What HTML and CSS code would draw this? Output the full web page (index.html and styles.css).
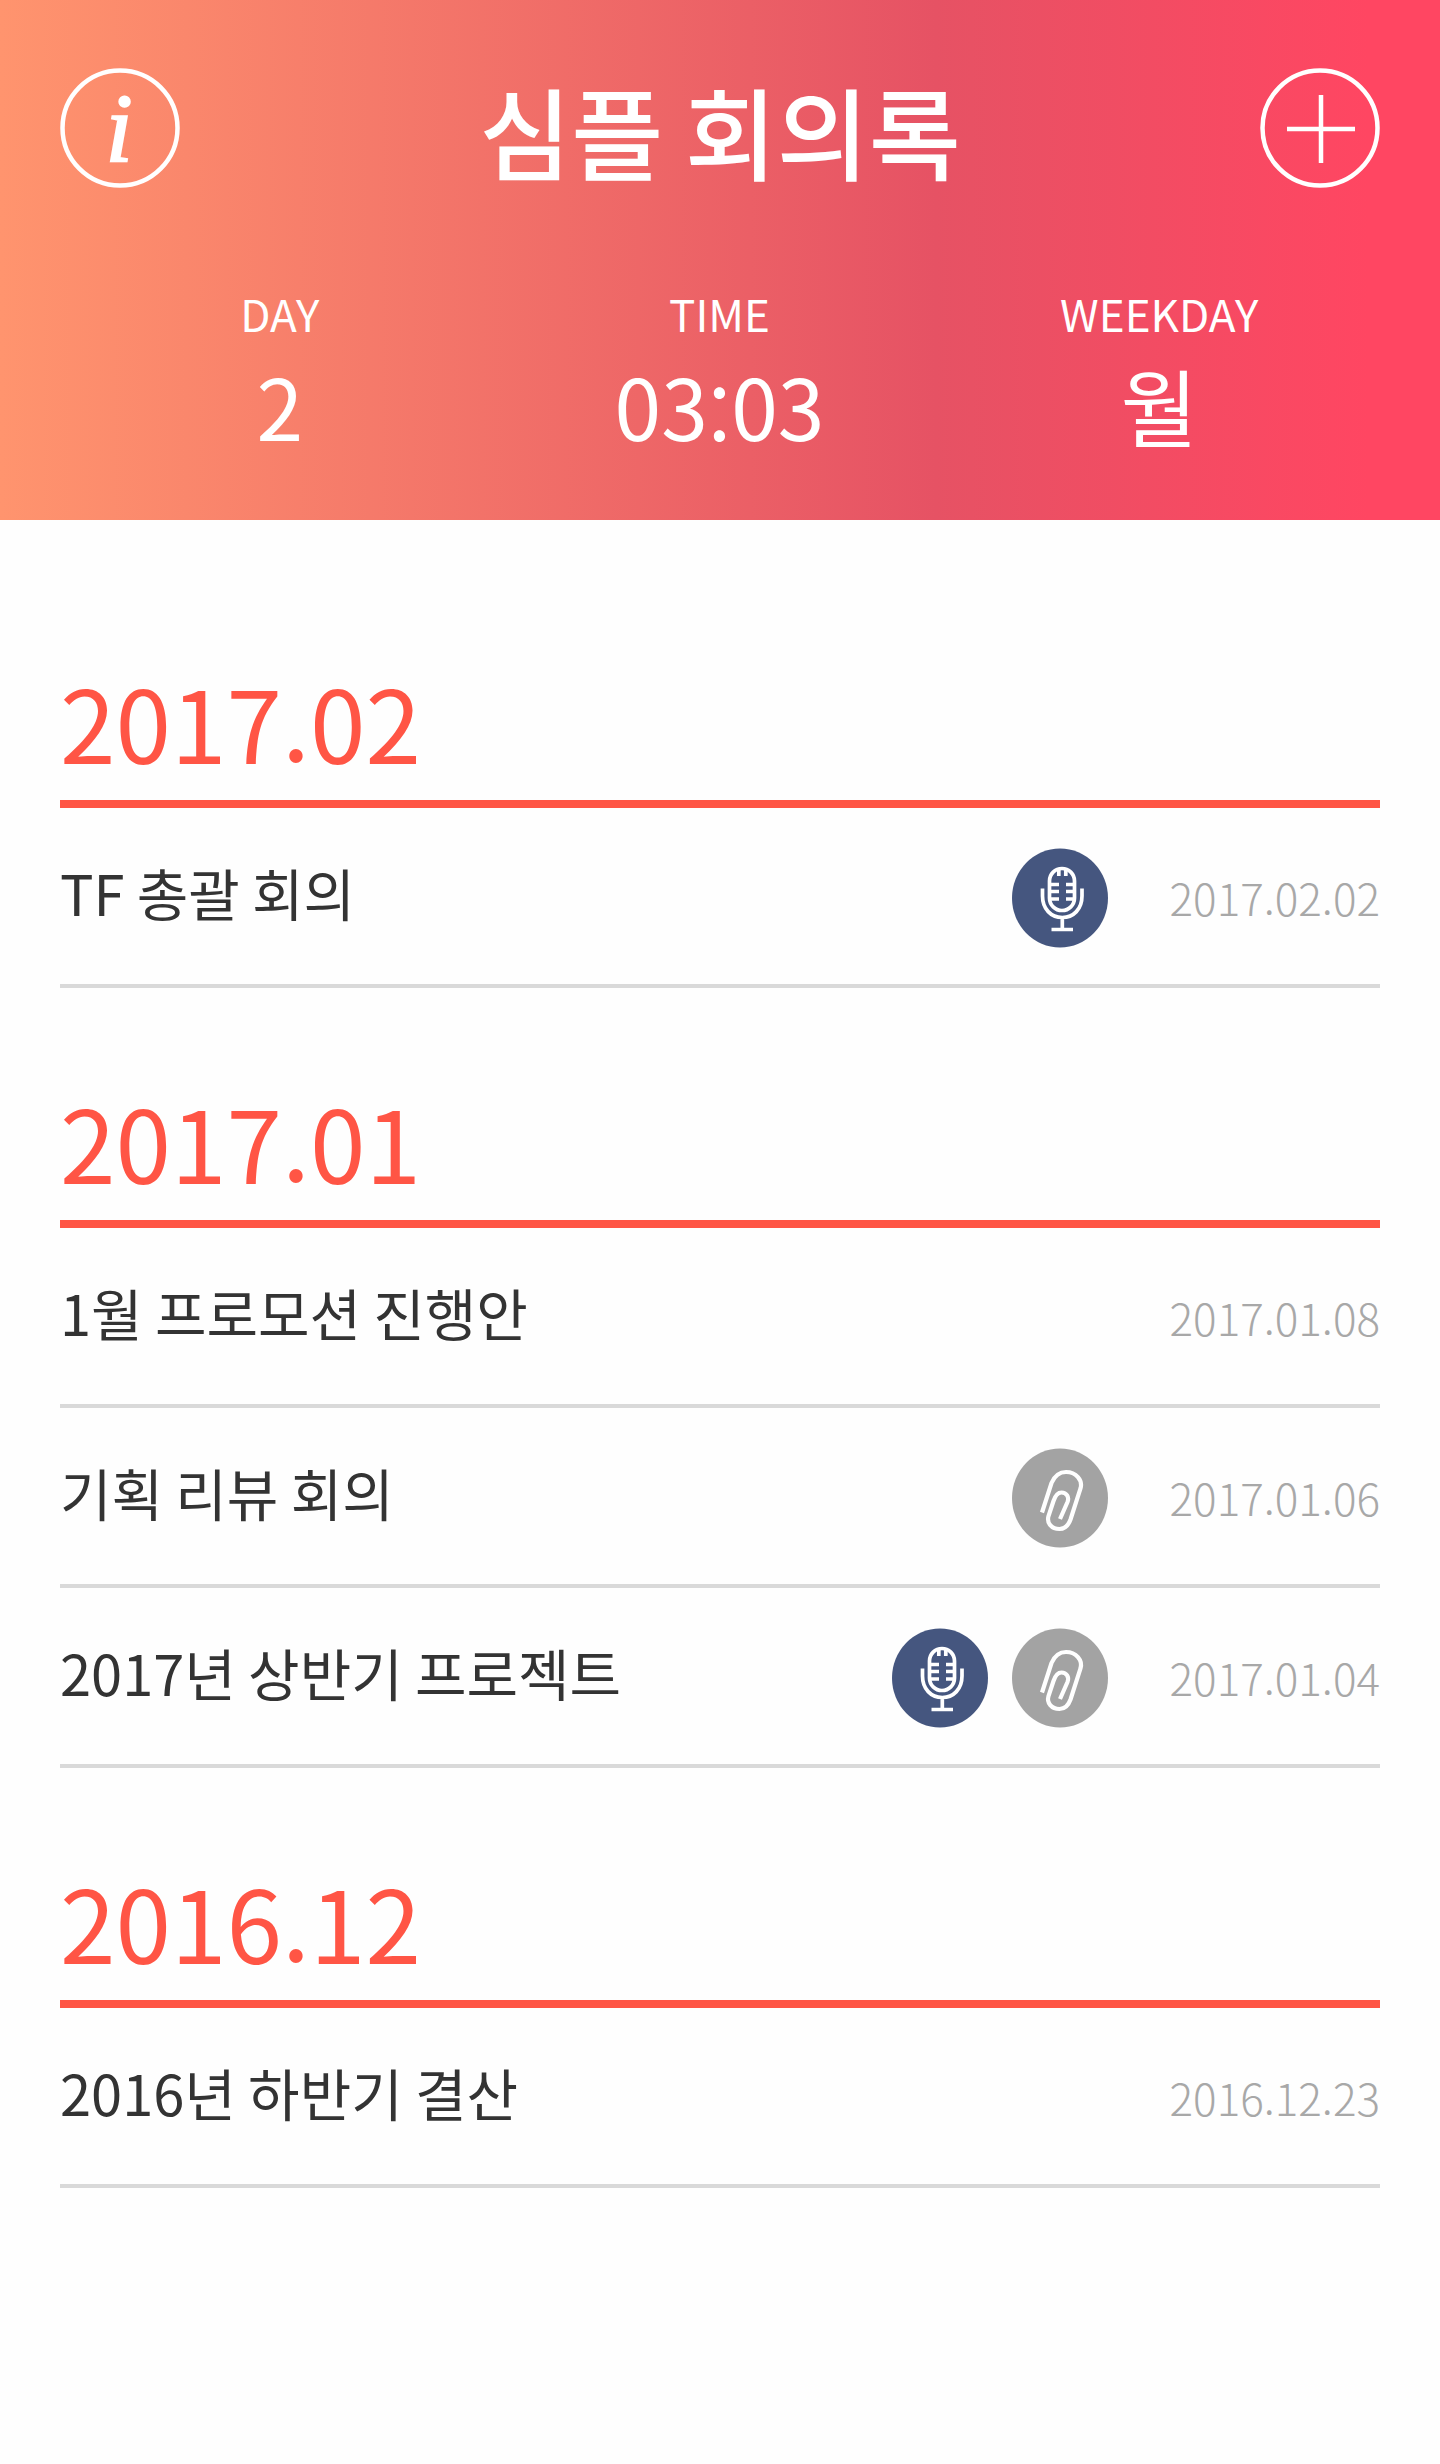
FILE: index.html
```html
<!DOCTYPE html>
<html lang="ko">
<head>
    <meta charset="UTF-8">
    <meta name="viewport" content="width=device-width, initial-scale=1.0">
    <title>심플 회의록</title>
    <link rel="stylesheet" href="styles.css">
</head>
<body>
    <!-- 아이콘 -->
    <svg class="sprite" width="0" height="0">
        <symbol id="mic" viewBox="0 0 96 100">
            <ellipse cx="48" cy="50" rx="48" ry="49.5" fill="#45567f"/>
            <g fill="none" stroke="#fff" stroke-width="3.7">
                <rect x="37.5" y="20.5" width="25" height="42" rx="12.5"/>
                <path d="M30.5 40.5V48C30.5 61 39 69.500 50.300 69.500S70 61 70 48V40.500M50.300 69.500V81.500M39.500 81.500H61"/>
                <path d="M46.800 20V28M53.800 20V28M38 36.500H47M38 43.500H47M38 51H47M62 36.500H54M62 43.500H54M62 51H54"/>
            </g>
        </symbol>
        <symbol id="clip" viewBox="0 0 96 100">
            <ellipse cx="48" cy="50" rx="48" ry="49.5" fill="#a3a3a3"/>
            <path d="M30 64.500L39.500 35C43 27 48 24 54 24C64 24 71 32 68.500 40.500L58.500 71.500C56 78.500 52 81 47.500 81C39.500 81 34.500 75 36.500 68L41.500 53C43.500 47 46 44.500 49.500 44.500C54.500 44.500 57.500 49 55.500 54L48 71" fill="none" stroke="#fff" stroke-width="4.2"/>
        </symbol>
    </svg>

    <!-- 헤더 -->
    <header class="header">
        <div class="title-bar">
            <button class="round-btn">
                <svg viewBox="0 0 120 120">
                    <circle cx="60" cy="60" r="57.5"/>
                </svg>
                <span class="info-letter">i</span>
            </button>
            <h1>심플 회의록</h1>
            <button class="round-btn">
                <svg viewBox="0 0 120 120">
                    <circle cx="60" cy="60" r="57.5"/>
                    <path d="M61 27v68M27 61h68"/>
                </svg>
            </button>
        </div>
        <div class="status">
            <div class="status-item">
                <p class="status-label">DAY</p>
                <p class="status-value">2</p>
            </div>
            <div class="status-item">
                <p class="status-label">TIME</p>
                <p class="status-value">03<span class="colon">:</span>03</p>
            </div>
            <div class="status-item">
                <p class="status-label">WEEKDAY</p>
                <p class="status-value">월</p>
            </div>
        </div>
    </header>

    <!-- 회의 목록 -->
    <main class="list">
        <section class="month">
            <h2>2017.02</h2>
            <div class="meeting">
                <p class="name">TF 총괄 회의</p>
                <svg class="icon"><use href="#mic"/></svg>
                <p class="date">2017.02.02</p>
            </div>
        </section>

        <section class="month">
            <h2>2017.01</h2>
            <div class="meeting">
                <p class="name">1월 프로모션 진행안</p>
                <p class="date">2017.01.08</p>
            </div>
            <div class="meeting">
                <p class="name">기획 리뷰 회의</p>
                <svg class="icon"><use href="#clip"/></svg>
                <p class="date">2017.01.06</p>
            </div>
            <div class="meeting">
                <p class="name">2017년 상반기 프로젝트</p>
                <svg class="icon"><use href="#mic"/></svg>
                <svg class="icon"><use href="#clip"/></svg>
                <p class="date">2017.01.04</p>
            </div>
        </section>

        <section class="month">
            <h2>2016.12</h2>
            <div class="meeting">
                <p class="name">2016년 하반기 결산</p>
                <p class="date">2016.12.23</p>
            </div>
        </section>
    </main>
</body>
</html>
```
FILE: styles.css
```css
/* 기본 */
* {
    box-sizing: border-box;
}
body {
    margin: 0;
    font-family: "Noto Sans CJK KR", sans-serif;
    background-color: #fefefe;
    color: #333;
}
h1, h2, p {
    margin: 0;
    font-weight: 400;
}
.sprite {
    display: block;
}

/* 헤더 */
.header {
    height: 520px;
    padding: 68px 60px 0;
    color: #fff;
    background: linear-gradient(to right, #ff946e 0%, #e65264 65%, #ff4662 95%);
}
.title-bar {
    display: flex;
    justify-content: space-between;
    height: 120px;
}
.title-bar h1 {
    font-size: 100px;
    font-weight: 500;
    line-height: 123px;
    word-spacing: -6.5px;
}
.round-btn {
    position: relative;
    width: 120px;
    height: 120px;
    padding: 0;
    border: none;
    background: none;
    color: #fff;
    cursor: pointer;
}
.round-btn svg {
    display: block;
    width: 120px;
    height: 120px;
    fill: none;
    stroke: #fff;
    stroke-width: 4.5;
}
.info-letter {
    position: absolute;
    left: -1px;
    top: 0;
    width: 120px;
    font: italic 98px/120px "Liberation Serif", serif;
    -webkit-text-stroke: 2px #fff;
    text-align: center;
}
.status {
    display: flex;
    padding: 93px 1px 0 0;
}
.status-item {
    flex: 1;
    text-align: center;
}
.status-label {
    font-size: 44px;
    line-height: 64px;
}
.status-value {
    font-size: 84px;
    line-height: 119px;
}
.colon {
    display: inline-block;
    line-height: 1;
    vertical-align: -8px;
}

/* 회의 목록 */
.list {
    padding: 48px 60px 0;
}
.month h2 {
    height: 240px;
    padding-top: 81px;
    font-size: 100px;
    line-height: 144px;
    color: #ff5545;
    border-bottom: 8px solid #ff5545;
}
/* 이전 달 목록과의 간격 */
.month + .month h2 {
    height: 240px;
}
.meeting {
    display: flex;
    align-items: center;
    height: 180px;
    padding-top: 4px;
    border-bottom: 4px solid #d9d9d9;
}
.name {
    flex: 1;
    font-size: 56px;
    line-height: 80px;
    padding-bottom: 12px;
    word-spacing: -3.4px;
}
.icon {
    width: 96px;
    height: 100px;
    margin-left: 24px;
}
.date {
    margin-left: 62px;
    padding-bottom: 2px;
    font-size: 44px;
    font-weight: 300;
    line-height: 64px;
    color: #a8a8a8;
}
```
